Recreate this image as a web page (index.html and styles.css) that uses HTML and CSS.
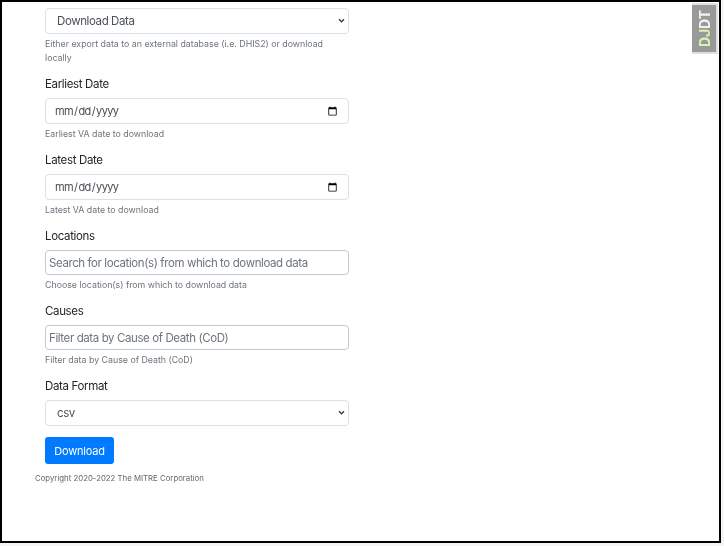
FILE: index.html
```html
<!DOCTYPE html>
<html lang="en">
<head>
  <meta charset="UTF-8">
  <meta name="viewport" content="width=device-width, initial-scale=1.0">
  <title>Download Data</title>
  <link rel="stylesheet" href="styles.css">
</head>
<body>
  <div class="frame">
    <form class="download-form">
      <div class="form-group first">
        <div class="select-wrap">
          <select class="form-control form-select">
            <option>Download Data</option>
          </select>
          <svg class="chevron" viewBox="0 0 8 6" aria-hidden="true"><path d="M1 1.5l3 3 3-3"/></svg>
        </div>
        <small class="form-text">Either export data to an external database (i.e. DHIS2) or download locally</small>
      </div>

      <div class="form-group">
        <label for="earliest">Earliest Date</label>
        <input class="form-control date" type="date" id="earliest">
        <small class="form-text">Earliest VA date to download</small>
      </div>

      <div class="form-group">
        <label for="latest">Latest Date</label>
        <input class="form-control date" type="date" id="latest">
        <small class="form-text">Latest VA date to download</small>
      </div>

      <div class="form-group">
        <label for="locations">Locations</label>
        <input class="form-control search" type="text" id="locations" placeholder="Search for location(s) from which to download data">
        <small class="form-text">Choose location(s) from which to download data</small>
      </div>

      <div class="form-group">
        <label for="causes">Causes</label>
        <input class="form-control search" type="text" id="causes" placeholder="Filter data by Cause of Death (CoD)">
        <small class="form-text">Filter data by Cause of Death (CoD)</small>
      </div>

      <div class="form-group">
        <label for="format">Data Format</label>
        <div class="select-wrap">
          <select class="form-control form-select" id="format">
            <option>csv</option>
          </select>
          <svg class="chevron" viewBox="0 0 8 6" aria-hidden="true"><path d="M1 1.5l3 3 3-3"/></svg>
        </div>
      </div>

      <button class="btn-primary" type="button">Download</button>
    </form>

    <footer class="copyright">Copyright 2020-2022 The MITRE Corporation</footer>

    <a class="djdt-handle" href="#"><span class="djdt-j">DJ</span>DT</a>
  </div>
</body>
</html>
```

FILE: styles.css
```css
* {
  margin: 0;
  padding: 0;
  box-sizing: border-box;
}

body {
  font-family: Inter, "Liberation Sans", sans-serif;
  background: #f5f5f5;
  color: #212529;
  height: 546px;
  overflow: hidden;
}

.frame {
  position: relative;
  width: 721px;
  height: 543px;
  background: #fff;
  border: 2px solid #000;
  overflow: hidden;
  filter: blur(0.35px);
}

.download-form {
  width: 304px;
  margin-left: 43px;
  padding-top: 6px;
}

.form-group {
  margin-bottom: 11px;
}

.form-group label {
  display: block;
  font-size: 11.5px;
  letter-spacing: -0.35px;
  line-height: 17px;
  margin-bottom: 5px;
}

.form-control {
  display: block;
  width: 100%;
  height: 26px;
  border: 1px solid #dcdfe3;
  border-radius: 4px;
  background: #fff;
  color: #495057;
  font-family: inherit;
  font-size: 11.5px;
  letter-spacing: -0.4px;
  outline: none;
}

.select-wrap {
  position: relative;
}

.form-select {
  appearance: none;
  padding-left: 11px;
}

.chevron {
  position: absolute;
  top: 10px;
  right: 4px;
  width: 7px;
  height: 5px;
  fill: none;
  stroke: #343a40;
  stroke-width: 1.6;
}

.date {
  padding: 0 8px;
  font-size: 11px;
  letter-spacing: -0.6px;
}

.search {
  height: 25px;
  padding: 0 3px;
  border-color: #c4c8cc;
}

.search::placeholder {
  color: #6c757d;
  opacity: 1;
}

.form-text {
  display: block;
  margin-top: 3px;
  font-size: 8.8px;
  line-height: 14px;
  color: #6c757d;
}

.btn-primary {
  display: block;
  width: 69px;
  height: 27px;
  padding-top: 1px;
  border: none;
  border-radius: 3px;
  background: #007bff;
  color: #fff;
  font-family: inherit;
  font-size: 11px;
  letter-spacing: -0.2px;
}

.copyright {
  margin: 8px 0 0 33px;
  font-size: 7.8px;
  line-height: 12px;
  color: #666;
}

/* debug toolbar handle */
.djdt-handle {
  position: absolute;
  top: 1px;
  right: 1px;
  width: 26px;
  height: 51px;
  display: flex;
  align-items: center;
  justify-content: center;
  background: #999;
  border: 2px solid #e0e0e0;
  border-right: none;
  color: #f2f2f2;
  font-size: 14px;
  font-weight: 700;
  text-decoration: none;
  writing-mode: vertical-rl;
  transform: rotate(180deg);
}

.djdt-j {
  color: #d8f2b4;
}
```
